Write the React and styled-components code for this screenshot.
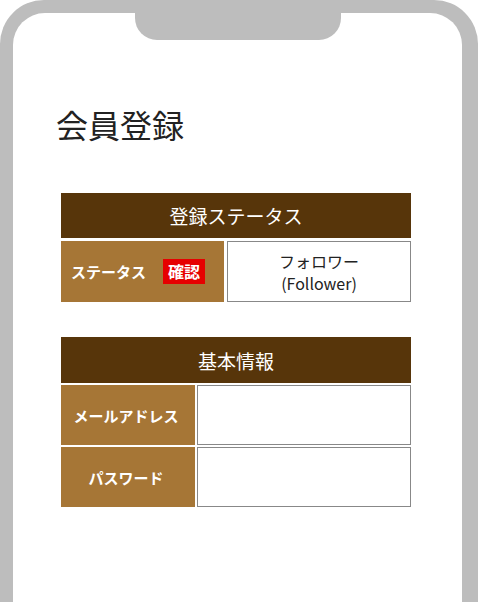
import React from 'react';
import styled, { createGlobalStyle } from 'styled-components';

const GlobalStyle = createGlobalStyle`
    html, body {
        margin: 0;
        padding: 0;
        background: #fff;
    }
    body {
        font-family: "Noto Sans CJK JP", "Noto Sans", sans-serif;
    }
`

const Frame = styled.div`
    width: 478px;
    height: 602px;
    overflow: hidden;
    box-sizing: border-box;
    background: #bdbdbd;
    border-radius: 44px 44px 0 0;
    padding: 13px 16px 0 13px;
    position: relative;
`

const Notch = styled.div`
    position: absolute;
    top: 0;
    left: 135px;
    width: 206px;
    height: 40px;
    background: #bdbdbd;
    border-radius: 0 0 22px 22px;
`

const Screen = styled.div`
    height: 100%;
    background: #fff;
    border-radius: 32px 32px 0 0;
    padding: 91px 0 0 48px;
    box-sizing: border-box;
`

const Title = styled.h1`
    margin: 0 0 49px -5px;
    font-size: 32px;
    font-weight: 400;
    line-height: 40px;
    color: #222;
`

const Section = styled.div`
    width: 350px;
    display: grid;
    grid-template-columns: ${props => props.labelWidth}px 1fr;
    gap: ${props => props.gap}px;
    margin-bottom: ${props => props.mb || 0}px;
`

const Header = styled.div`
    grid-column: 1 / -1;
    height: ${props => props.h}px;
    background: #57350a;
    color: #fff;
    font-size: 19px;
    display: flex;
    align-items: center;
    justify-content: center;
`

const Label = styled.div`
    height: ${props => props.h}px;
    background: #a67636;
    color: #fff;
    font-size: 15px;
    font-weight: 700;
    display: flex;
    align-items: center;
    justify-content: ${props => props.left ? 'flex-start' : 'center'};
    padding: ${props => props.left ? '0 0 0 10px' : '0 4px 0 0'};
    box-sizing: border-box;
`

const Badge = styled.span`
    background: #e60000;
    color: #fff;
    font-size: 16px;
    font-weight: 700;
    line-height: 25px;
    padding: 0 5px 0 5px;
    margin-left: 17px;
`

const Value = styled.div`
    border: 1px solid #888;
    background: #fff;
    color: #222;
    font-size: 16px;
    line-height: 22px;
    text-align: center;
    display: flex;
    flex-direction: column;
    align-items: center;
    justify-content: center;
`

const App = () =>
    <>
        <GlobalStyle />
        <Frame>
            <Notch />
            <Screen>
                <Title>会員登録</Title>
                <Section labelWidth={163} gap={3} mb={35}>
                    <Header h={45}>登録ステータス</Header>
                    <Label h={61} left>ステータス<Badge>確認</Badge></Label>
                    <Value>
                        <span>フォロワー</span>
                        <span>(Follower)</span>
                    </Value>
                </Section>
                <Section labelWidth={134} gap={2}>
                    <Header h={46}>基本情報</Header>
                    <Label h={60}>メールアドレス</Label>
                    <Value />
                    <Label h={60}>パスワード</Label>
                    <Value />
                </Section>
            </Screen>
        </Frame>
    </>

export default App;
